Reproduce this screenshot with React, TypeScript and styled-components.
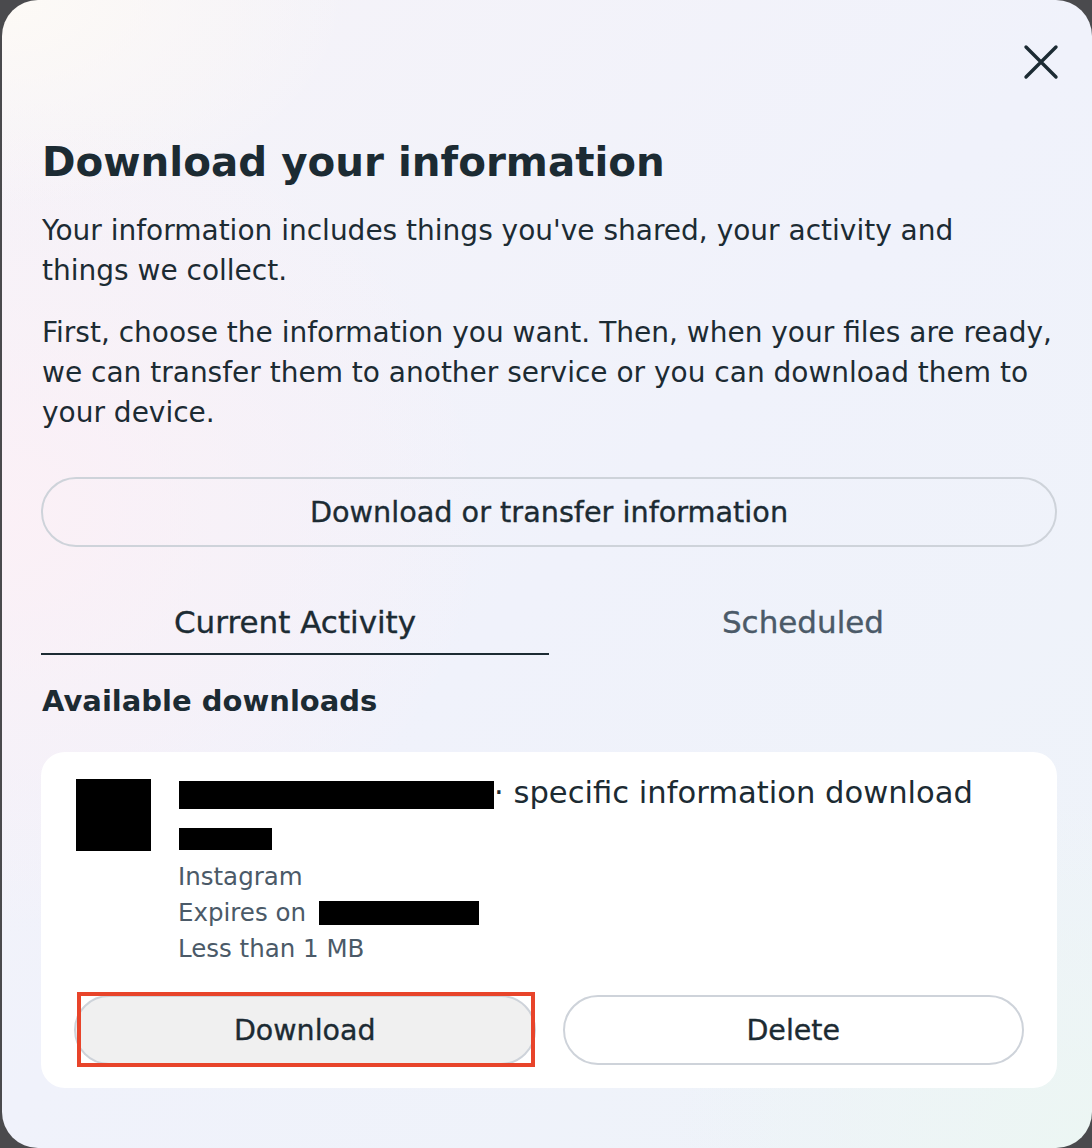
import React from "react";
import styled, { createGlobalStyle } from "styled-components";

const Global = createGlobalStyle`
  html, body { margin: 0; padding: 0; background: #4a4a4d; }
  body { font-family: "DejaVu Sans", "Noto Sans", sans-serif; color: #1c2b33; }
  * { box-sizing: border-box; }
`;

const Page = styled.div`
  display: flex;
  justify-content: flex-end;
  width: 1092px;
  height: 1148px;
  overflow: hidden;
`;

const Modal = styled.div`
  width: 1090px;
  height: 1148px;
  border-radius: 36px;
  background:
    radial-gradient(ellipse 700px 600px at 0% 45%, rgba(252, 240, 246, 0.9), rgba(252, 240, 246, 0) 70%),
    radial-gradient(ellipse 600px 500px at 100% 100%, rgba(236, 246, 243, 1), rgba(236, 246, 243, 0) 70%),
    radial-gradient(ellipse 500px 300px at 0% 0%, rgba(253, 250, 246, 1), rgba(253, 250, 246, 0) 70%),
    linear-gradient(135deg, #f6f3f8 0%, #f0f2fb 50%, #eef3f9 100%);
  padding: 0 35px 0 39px;
  display: flex;
  flex-direction: column;
`;

const TopBar = styled.div`
  display: flex;
  justify-content: flex-end;
  align-items: flex-start;
  padding-top: 44px;
  height: 137px;
`;

const CloseButton = styled.button`
  width: 36px;
  height: 36px;
  padding: 0;
  border: none;
  background: transparent;
  display: flex;
  align-items: center;
  justify-content: center;
  cursor: pointer;
  margin-right: -2px;
`;

const Title = styled.h1`
  margin: 0 0 0 1px;
  font-size: 40.4px;
  font-weight: 700;
  line-height: 50px;
  color: #1c2b33;
`;

const Paragraph = styled.p<{ $top: number }>`
  margin: ${(p) => p.$top}px 0 0 1px;
  font-size: 28px;
  line-height: 40px;
  font-weight: 400;
  color: #1c2b33;
  white-space: nowrap;
`;

const PillButton = styled.button<{ $filled?: boolean }>`
  height: 70px;
  border-radius: 35px;
  border: 2px solid #ced3da;
  background: ${(p) => (p.$filled ? "#f0f0f0" : "#ffffff")};
  font-family: inherit;
  font-size: 28.5px;
  font-weight: 400;
  -webkit-text-stroke: 0.35px #1c2b33;
  color: #1c2b33;
  cursor: pointer;
  width: 100%;
  padding: 0;
`;

const WideButton = styled(PillButton)`
  margin-top: 44px;
  background: transparent;
  font-size: 28.7px;
`;

const Tabs = styled.div`
  display: grid;
  grid-template-columns: 1fr 1fr;
  margin-top: 46px;
`;

const Tab = styled.div<{ $active?: boolean }>`
  height: 62px;
  padding-bottom: 2px;
  display: flex;
  align-items: center;
  justify-content: center;
  font-size: 31px;
  font-weight: 400;
  -webkit-text-stroke: 0.35px ${(p) => (p.$active ? "#1c2b33" : "#4b5a68")};
  color: ${(p) => (p.$active ? "#1c2b33" : "#4b5a68")};
  border-bottom: 2px solid ${(p) => (p.$active ? "#1c2b33" : "transparent")};
`;

const SectionTitle = styled.h2`
  margin: 26px 0 0 1px;
  font-size: 29px;
  font-weight: 700;
  line-height: 40px;
  color: #1c2b33;
`;

const Card = styled.div`
  margin-top: 31px;
  background: #ffffff;
  border-radius: 24px;
  padding: 27px 33px 23px 33px;
`;

const CardRow = styled.div`
  display: flex;
  gap: 28px;
`;

const Thumb = styled.div`
  width: 75px;
  height: 72px;
  margin-left: 2px;
  background: #000;
  flex-shrink: 0;
`;

const Info = styled.div`
  display: flex;
  flex-direction: column;
  margin-top: -8px;
`;

const ItemTitle = styled.div`
  font-size: 30.6px;
  line-height: 44px;
  font-weight: 400;
  color: #1c2b33;
  white-space: nowrap;
`;

const Redact = styled.span<{ $w: number; $h: number }>`
  display: inline-block;
  width: ${(p) => p.$w}px;
  height: ${(p) => p.$h}px;
  background: #000;
  vertical-align: middle;
`;

const Meta = styled.div`
  font-size: 24.5px;
  line-height: 36px;
  height: 36px;
  color: #4b5a68;
  display: flex;
  align-items: center;
  gap: 13px;
  margin-left: -1px;
`;

const Actions = styled.div`
  display: grid;
  grid-template-columns: 1fr 1fr;
  gap: 27px;
  margin-top: 28px;
`;

const Highlight = styled.div`
  position: relative;
  display: flex;
`;

const RedBox = styled.div`
  position: absolute;
  left: 3px;
  right: 1px;
  top: -3px;
  bottom: -2px;
  border: 4px solid #e8442a;
  pointer-events: none;
`;

export default function App() {
  return (
    <>
      <Global />
      <Page>
        <Modal>
          <TopBar>
            <CloseButton aria-label="Close">
              <svg width="36" height="36" viewBox="0 0 36 36">
                <path d="M3 3 L33 33 M33 3 L3 33" stroke="#1c2b33" strokeWidth="3.4" strokeLinecap="round" />
              </svg>
            </CloseButton>
          </TopBar>
          <Title>Download your information</Title>
          <Paragraph $top={24}>
            Your information includes things you've shared, your activity and
            <br />
            things we collect.
          </Paragraph>
          <Paragraph $top={22}>
            First, choose the information you want. Then, when your files are ready,
            <br />
            we can transfer them to another service or you can download them to
            <br />
            your device.
          </Paragraph>
          <WideButton>Download or transfer information</WideButton>
          <Tabs>
            <Tab $active>Current Activity</Tab>
            <Tab>Scheduled</Tab>
          </Tabs>
          <SectionTitle>Available downloads</SectionTitle>
          <Card>
            <CardRow>
              <Thumb />
              <Info>
                <ItemTitle>
                  <Redact $w={315} $h={28} />· specific information download
                  <br />
                  <Redact $w={93} $h={22} />
                </ItemTitle>
                <Meta>Instagram</Meta>
                <Meta>
                  Expires on <Redact $w={160} $h={24} />
                </Meta>
                <Meta>Less than 1 MB</Meta>
              </Info>
            </CardRow>
            <Actions>
              <Highlight>
                <PillButton $filled>Download</PillButton>
                <RedBox />
              </Highlight>
              <PillButton>Delete</PillButton>
            </Actions>
          </Card>
        </Modal>
      </Page>
    </>
  );
}
